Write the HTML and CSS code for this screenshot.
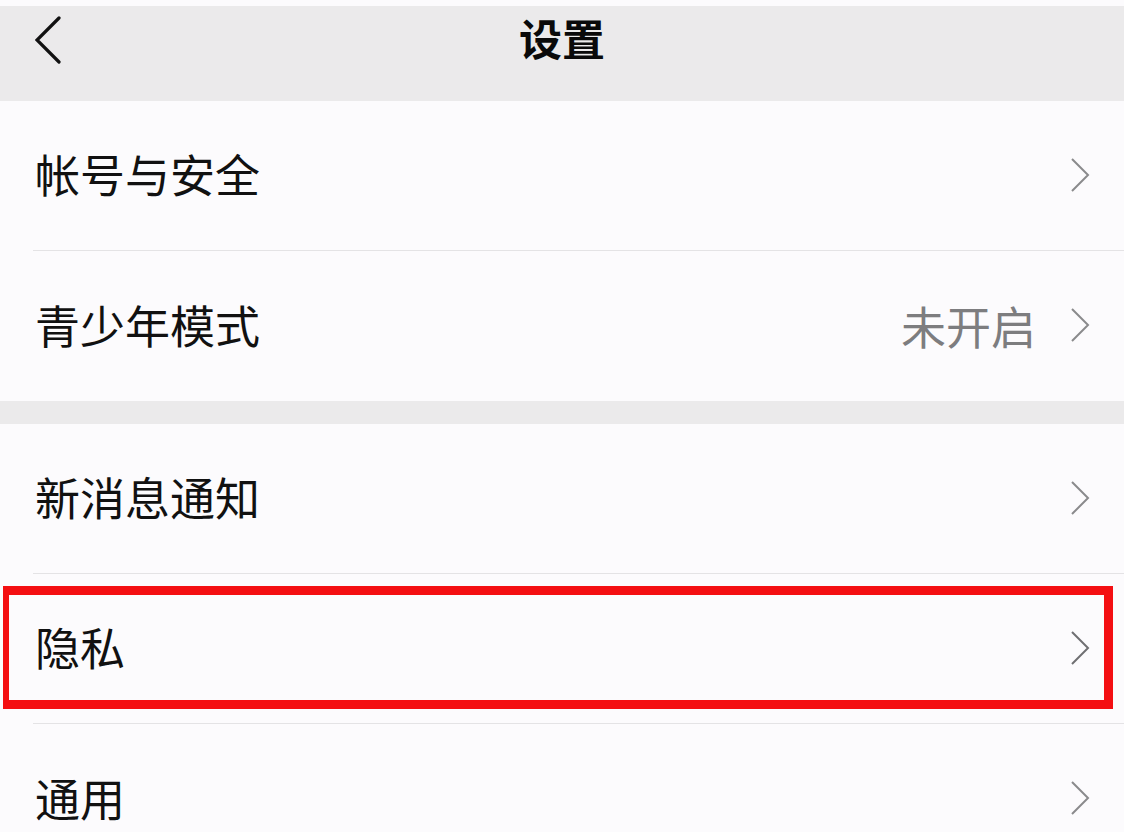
FILE: index.html
```html
<!DOCTYPE html>
<html lang="zh-CN">
<head>
<meta charset="utf-8">
<title>设置</title>
<link rel="stylesheet" href="styles.css">
</head>
<body>
<div class="topstrip"></div>
<header class="header">
  <div class="back">
    <svg width="30" height="48" viewBox="0 0 30 48"><polyline points="24,2 2,24 24,46" fill="none" stroke="#111" stroke-width="3.2" stroke-linecap="round" stroke-linejoin="miter"/></svg>
  </div>
  <div class="title">设置</div>
  <div></div>
</header>
<section class="group">
  <div class="row"><span class="label">帐号与安全</span><span class="right"><svg class="chev" width="20" height="36" viewBox="0 0 20 36"><polyline points="2,2 18,18 2,34" fill="none" stroke="#8a8a8c" stroke-width="2"/></svg></span></div>
  <div class="row last"><span class="label">青少年模式</span><span class="right"><span class="value">未开启</span><svg class="chev" width="20" height="36" viewBox="0 0 20 36"><polyline points="2,2 18,18 2,34" fill="none" stroke="#8a8a8c" stroke-width="2"/></svg></span></div>
</section>
<div class="gap"></div>
<section class="group">
  <div class="row"><span class="label">新消息通知</span><span class="right"><svg class="chev" width="20" height="36" viewBox="0 0 20 36"><polyline points="2,2 18,18 2,34" fill="none" stroke="#8a8a8c" stroke-width="2"/></svg></span></div>
  <div class="row highlighted"><span class="label">隐私</span><span class="right"><svg class="chev" width="20" height="36" viewBox="0 0 20 36"><polyline points="2,2 18,18 2,34" fill="none" stroke="#6f6f72" stroke-width="2"/></svg></span><div class="redbox"></div></div>
  <div class="row last"><span class="label">通用</span><span class="right"><svg class="chev" width="20" height="36" viewBox="0 0 20 36"><polyline points="2,2 18,18 2,34" fill="none" stroke="#8a8a8c" stroke-width="2"/></svg></span></div>
</section>
</body>
</html>
```
FILE: styles.css
```css
html, body {
  margin: 0;
  padding: 0;
}
body {
  background: #fcfbfd;
  font-family: "Noto Sans CJK SC", "Noto Sans", sans-serif;
  color: #111;
  overflow: hidden;
}
.topstrip {
  height: 6px;
  background: #fcfbfd;
}
.header {
  height: 95px;
  background: #ebeaeb;
  display: grid;
  grid-template-columns: 1fr auto 1fr;
  align-items: start;
}
.back {
  padding-left: 35px;
  padding-top: 10px;
}
.back svg {
  display: block;
}
.title {
  font-size: 43px;
  font-weight: 700;
  line-height: 1;
  padding-top: 10px;
  color: #0a0a0a;
}
.group {
  background: #fcfbfd;
}
.row {
  position: relative;
  box-sizing: border-box;
  height: 150px;
  margin-left: 33px;
  padding-left: 2px;
  padding-right: 34px;
  padding-bottom: 4px;
  border-bottom: 1px solid #e4e3e5;
  display: flex;
  align-items: center;
  justify-content: space-between;
}
.row.last {
  border-bottom: none;
}
.label {
  font-size: 45px;
  line-height: 1;
  color: #111;
}
.right {
  display: flex;
  align-items: center;
  gap: 34px;
  padding-top: 2px;
}
.value {
  font-size: 45px;
  line-height: 1;
  color: #7d7d7f;
}
.chev {
  display: block;
}
.gap {
  height: 23px;
  background: #ebeaeb;
}
.redbox {
  position: absolute;
  left: -30px;
  right: 11px;
  top: 12px;
  bottom: 14px;
  border: 9px solid #f40f12;
  border-left-width: 6px;
  pointer-events: none;
}
```
